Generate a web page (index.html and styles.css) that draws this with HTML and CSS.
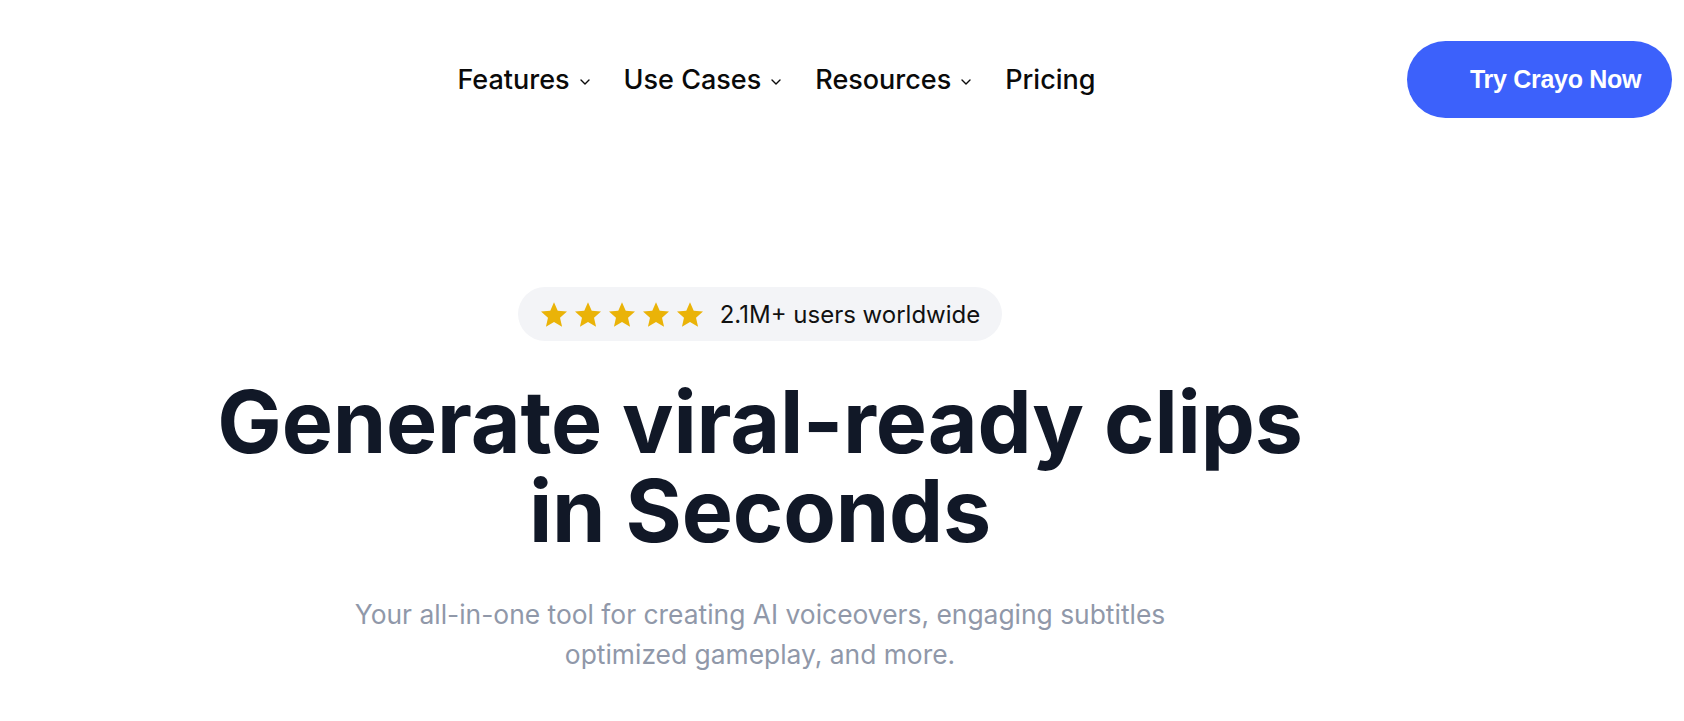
FILE: index.html
```html
<!DOCTYPE html>
<html lang="en">
<head>
<meta charset="utf-8">
<title>Crayo</title>
<link rel="stylesheet" href="styles.css">
</head>
<body>
<header class="header">
  <div class="logo-slot"></div>
  <nav class="nav">
    <a class="nav-item" href="#">Features <svg class="chev" viewBox="0 0 10 6" width="10" height="6"><path d="M1 1l4 4 4-4" fill="none" stroke="currentColor" stroke-width="1.4" stroke-linecap="round" stroke-linejoin="round"/></svg></a>
    <a class="nav-item" href="#">Use Cases <svg class="chev" viewBox="0 0 10 6" width="10" height="6"><path d="M1 1l4 4 4-4" fill="none" stroke="currentColor" stroke-width="1.4" stroke-linecap="round" stroke-linejoin="round"/></svg></a>
    <a class="nav-item" href="#">Resources <svg class="chev" viewBox="0 0 10 6" width="10" height="6"><path d="M1 1l4 4 4-4" fill="none" stroke="currentColor" stroke-width="1.4" stroke-linecap="round" stroke-linejoin="round"/></svg></a>
    <a class="nav-item" href="#">Pricing</a>
  </nav>
  <a class="cta" href="#">Try Crayo Now</a>
</header>

<main class="hero">
  <div class="hero-col">
    <div class="badge">
      <div class="stars">
        <svg viewBox="1.2 1.5 21.6 20.5" width="26" height="25"><path d="M12 1.5l3.1 7.1 7.7.7-5.8 5.1 1.7 7.6L12 18l-6.7 4 1.7-7.6-5.8-5.1 7.7-.7z" fill="#eab308"/></svg>
        <svg viewBox="1.2 1.5 21.6 20.5" width="26" height="25"><path d="M12 1.5l3.1 7.1 7.7.7-5.8 5.1 1.7 7.6L12 18l-6.7 4 1.7-7.6-5.8-5.1 7.7-.7z" fill="#eab308"/></svg>
        <svg viewBox="1.2 1.5 21.6 20.5" width="26" height="25"><path d="M12 1.5l3.1 7.1 7.7.7-5.8 5.1 1.7 7.6L12 18l-6.7 4 1.7-7.6-5.8-5.1 7.7-.7z" fill="#eab308"/></svg>
        <svg viewBox="1.2 1.5 21.6 20.5" width="26" height="25"><path d="M12 1.5l3.1 7.1 7.7.7-5.8 5.1 1.7 7.6L12 18l-6.7 4 1.7-7.6-5.8-5.1 7.7-.7z" fill="#eab308"/></svg>
        <svg viewBox="1.2 1.5 21.6 20.5" width="26" height="25"><path d="M12 1.5l3.1 7.1 7.7.7-5.8 5.1 1.7 7.6L12 18l-6.7 4 1.7-7.6-5.8-5.1 7.7-.7z" fill="#eab308"/></svg>
      </div>
      <span class="badge-text">2.1M+ users worldwide</span>
    </div>
    <h1 class="title">Generate viral-ready clips<br>in Seconds</h1>
    <p class="subtitle">Your all-in-one tool for creating AI voiceovers, engaging subtitles<br>optimized gameplay, and more.</p>
  </div>
</main>
</body>
</html>
```
FILE: styles.css
```css
* { box-sizing: border-box; }
html, body { margin: 0; padding: 0; background: #ffffff; }
body { font-family: Inter, "Noto Sans", sans-serif; color: #0a0a0a; }

.header {
  display: flex;
  align-items: center;
  justify-content: space-between;
  padding: 41px 12px 0 12px;
  height: 118px;
}
.logo-slot { width: 134px; height: 1px; }
.nav { display: flex; align-items: center; gap: 34px; }
.nav-item {
  display: flex;
  align-items: center;
  gap: 10px;
  font-size: 27px;
  font-weight: 500;
  color: #0a0a0a;
  text-decoration: none;
  line-height: 1;
}
.chev { margin-top: 4px; }
.cta {
  display: flex;
  align-items: center;
  height: 77px;
  width: 265px;
  padding: 0 30px 0 63px;
  border-radius: 999px;
  background: #3c61fb;
  color: #ffffff;
  font-family: "Liberation Sans", Arial, sans-serif;
  font-weight: 700;
  font-size: 25px;
  letter-spacing: -0.3px;
  text-decoration: none;
  white-space: nowrap;
}

.hero { padding: 169px 164px 0 0; }
.hero-col { display: flex; flex-direction: column; align-items: center; }
.badge {
  display: flex;
  align-items: center;
  gap: 17px;
  height: 54px;
  padding: 0 22px 0 23px;
  border-radius: 999px;
  background: #f3f4f7;
}
.stars { display: flex; gap: 8px; }
.stars svg { display: block; }
.badge-text { font-size: 24px; color: #111111; }
.title {
  margin: 37px 0 0 0;
  font-size: 86px;
  line-height: 89px;
  font-weight: 700;
  letter-spacing: -0.2px;
  color: #111827;
  text-align: center;
}
.subtitle {
  margin: 38px 0 0 0;
  font-size: 26.4px;
  line-height: 40px;
  color: #9098a9;
  text-align: center;
}
```
